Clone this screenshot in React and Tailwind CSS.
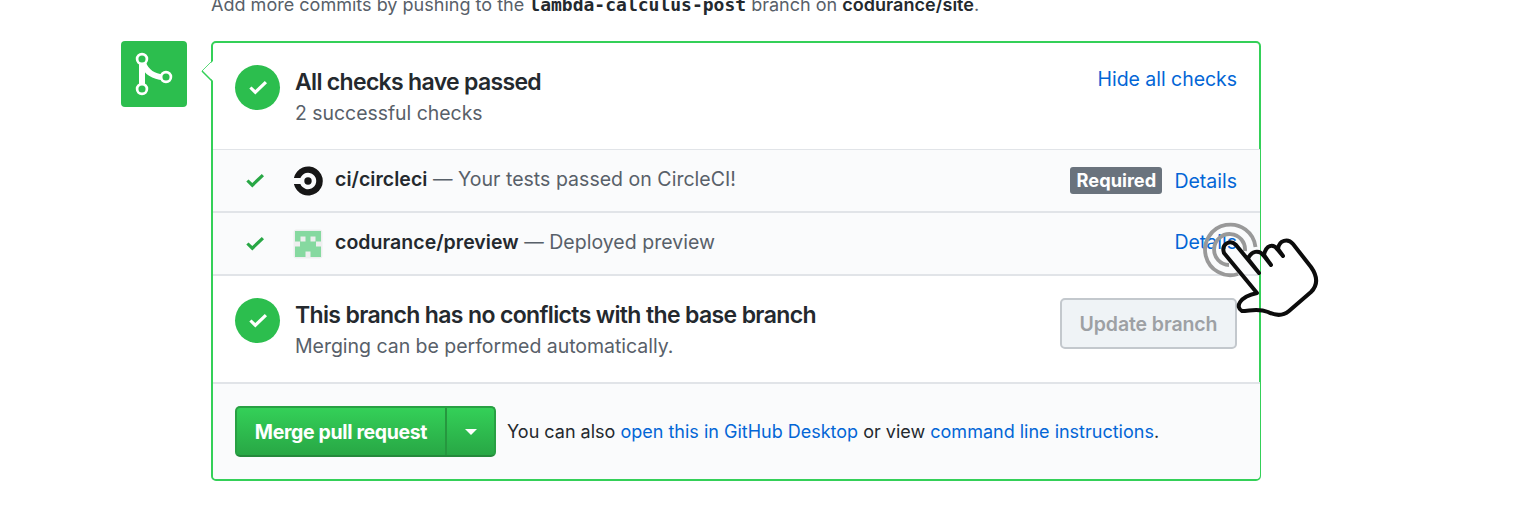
const Check = ({ className }) => (
  <svg viewBox="0 0 18 15" className={className} fill="currentColor">
    <path d="M18 3.3 6.3 14.4 .3 8.6 2.5 6.4 6.3 9.9 15.8.9Z" />
  </svg>
);

const PassBadge = () => (
  <div className="mr-[15px] flex h-[45px] w-[45px] shrink-0 items-center justify-center rounded-full bg-[#2cbe4e] text-white">
    <Check className="h-[15px] w-[18px]" />
  </div>
);

const CircleCI = () => (
  <svg viewBox="0 0 30 30" className="h-[30px] w-[30px]">
    <path d="M.9 12A14.6 14.6 0 1 1 .9 18H7.4A8.2 8.2 0 1 0 7.4 12Z" fill="#161616" />
    <circle cx="15" cy="15" r="3.7" fill="#161616" />
  </svg>
);

const Identicon = () => (
  <svg viewBox="0 0 30 30" className="h-[30px] w-[30px]">
    <rect x=".5" y=".5" width="29" height="29" rx="3" fill="#eeefef" />
    <path
      fill="#86d9a0"
      fillRule="evenodd"
      d="M2 2H28V12.5H23V17.5H28V28H17.5V22.5H12.5V28H2V17.5H7V12.5H2ZM7.5 7.5V12.5H12.5V7.5ZM17.5 7.5V12.5H22.5V7.5Z"
    />
  </svg>
);

const Pointer = () => (
  <svg viewBox="0 0 180 120" className="absolute left-[1160px] top-[210px] h-[120px] w-[180px]" fill="none" strokeLinecap="round" strokeLinejoin="round">
    <g stroke="#999" strokeWidth="3.8" strokeLinecap="butt">
      <path d="M78 64A25.3 25.3 0 1 1 95.500 37" />
      <path d="M69 55A15.500 15.500 0 1 1 85 41" />
    </g>
    <path
      d="M97 83 64 43C61 34 70 29 76 35L99 63 88 49C91 41 99 39 104 46L111 55 104 45C106 35 113 33 118 40L123 46 118 39C119 30 128 28 133 34L151 57C158 67 158 75 151 82L129 101C123 106 116 106 108 102 98 98 90 101 82 101 75 97 79 87 97 83Z"
      stroke="#0c0c0c"
      strokeWidth="4"
    />
  </svg>
);

const Link = ({ children, className = "" }) => <a className={`text-[#0366d6] ${className}`}>{children}</a>;

export default function App() {
  return (
    <div className="relative h-[505px] w-[1538px] overflow-hidden whitespace-nowrap bg-white font-['Inter',sans-serif] text-[19.5px] leading-[30px] text-[#24292e]">
      <p className="-mt-[10px] ml-[211px] h-[51px] text-[18.05px] text-[#586069]">
        <span>Add more commits by pushing to the </span>
        <b className="font-['DejaVu_Sans_Mono',monospace] text-[18px] text-[#24292e]">lambda-calculus-post</b>
        <span> branch on </span>
        <b className="font-semibold text-[#24292e]">codurance/site</b>.
      </p>
      <div className="flex">
        <div className="ml-[121px] h-[66px] w-[66px] rounded-[4px] bg-[#2cbe4e]">
          <svg viewBox="0 0 66 66" className="h-[66px] w-[66px]" fill="none" stroke="#fff">
            <path d="M21 21V45" strokeWidth="6" />
            <path d="M22 22C25 31 33 36 42 36" strokeWidth="6" />
            <g strokeWidth="2.7" fill="#2cbe4e">
              <circle cx="21" cy="18" r="4.9" />
              <circle cx="21" cy="48" r="4.9" />
              <circle cx="45" cy="36" r="4.9" />
            </g>
          </svg>
        </div>
        <div className="relative ml-[24px] h-[440px] w-[1050px] rounded-[5px] border-2 border-[#34d058] bg-white">
          <svg viewBox="0 0 12 24" className="absolute -left-[12px] top-[16px] h-[24px] w-[12px]">
            <path d="M12 2V22L2 12Z" fill="#fff" />
            <path d="M11 2 1 12" stroke="#34d058" strokeWidth=".8" />
            <path d="M1 12 11 22" stroke="#34d058" strokeWidth="1.5" />
          </svg>
          <section className="flex h-[106px] px-[22px] pt-[22px]">
            <PassBadge />
            <div className="flex-1">
              <h3 className="mt-[2px] text-[23px] font-semibold leading-[30px] tracking-[-0.68px]">All checks have passed</h3>
              <p className="pt-px text-[19.4px]  text-[#586069]">2 successful checks</p>
            </div>
            <Link className="-mt-px tracking-[-0.04px]">Hide all checks</Link>
          </section>
          <section className="-mr-px flex h-[62px] items-center border-t border-[#e1e4e8] bg-[#fafbfc] pl-[33px] pr-[23px]">
            <Check className="mr-[29px] h-[15px] w-[18px] text-[#28a745]" />
            <CircleCI />
            <p className="ml-[12px] flex-1 pb-[4px] tracking-[0.03px] text-[#586069]">
              <b className="font-semibold text-[#24292e]">ci/circleci</b> — Your tests passed on CircleCI!
            </p>
            <span className="mr-[12px] h-[27px] w-[92px] rounded-[3px] bg-[#6a737d] text-center text-[18.2px] font-bold leading-[26px] text-white">Required</span>
            <Link>Details</Link>
          </section>
          <section className="-mr-px flex h-[63px] items-center border-t-2 border-[#e1e4e8] bg-[#fafbfc] pl-[33px] pr-[23px]">
            <Check className="mr-[29px] h-[15px] w-[18px] text-[#28a745]" />
            <Identicon />
            <p className="ml-[12px] flex-1 pb-[4px] tracking-[0.03px] text-[#586069]">
              <b className="font-semibold text-[#24292e]">codurance/preview</b> — Deployed preview
            </p>
            <Link className="pb-[4px]">Details</Link>
          </section>
          <section className="flex h-[108px] border-t-2 border-[#e1e4e8] px-[22px] pt-[22px]">
            <PassBadge />
            <div className="flex-1">
              <h3 className="mt-[2px] text-[23px] font-semibold leading-[30px] tracking-[-0.64px]">This branch has no conflicts with the base branch</h3>
              <p className="pt-px tracking-[-0.03px] text-[#586069]">Merging can be performed automatically.</p>
            </div>
            <button className="h-[51px] w-[177px] rounded-[5px] border-2 border-[#c3c8cd] bg-[#eff3f6] font-semibold tracking-[-0.1px] text-[#9da0a4]">Update branch</button>
          </section>
          <section className="-mr-px flex h-[97px] items-center rounded-b-[4px] border-t-2 border-[#e1e4e8] bg-[#fafbfc] pl-[22px]">
            <div className="flex h-[51px] w-[261px] rounded-[5px] border-2 border-[#28a043] border-b-[#24893b] bg-linear-to-b from-[#34d058] to-[#28a745] font-bold text-white">
              <button className="w-[208px] tracking-[-0.35px]">Merge pull request</button>
              <button className="flex flex-1 items-center justify-center border-l-2 border-[#26973f]">
                <svg viewBox="0 0 12 6" className="h-[6px] w-[12px]" fill="#fff"><path d="M0 0H12L6 6Z" /></svg>
              </button>
            </div>
            <p className="ml-[11px] text-[18px]">
              You can also <Link>open this in GitHub Desktop</Link> or view <Link>command line instructions</Link>.
            </p>
          </section>
        </div>
      </div>
      <Pointer />
    </div>
  );
}
